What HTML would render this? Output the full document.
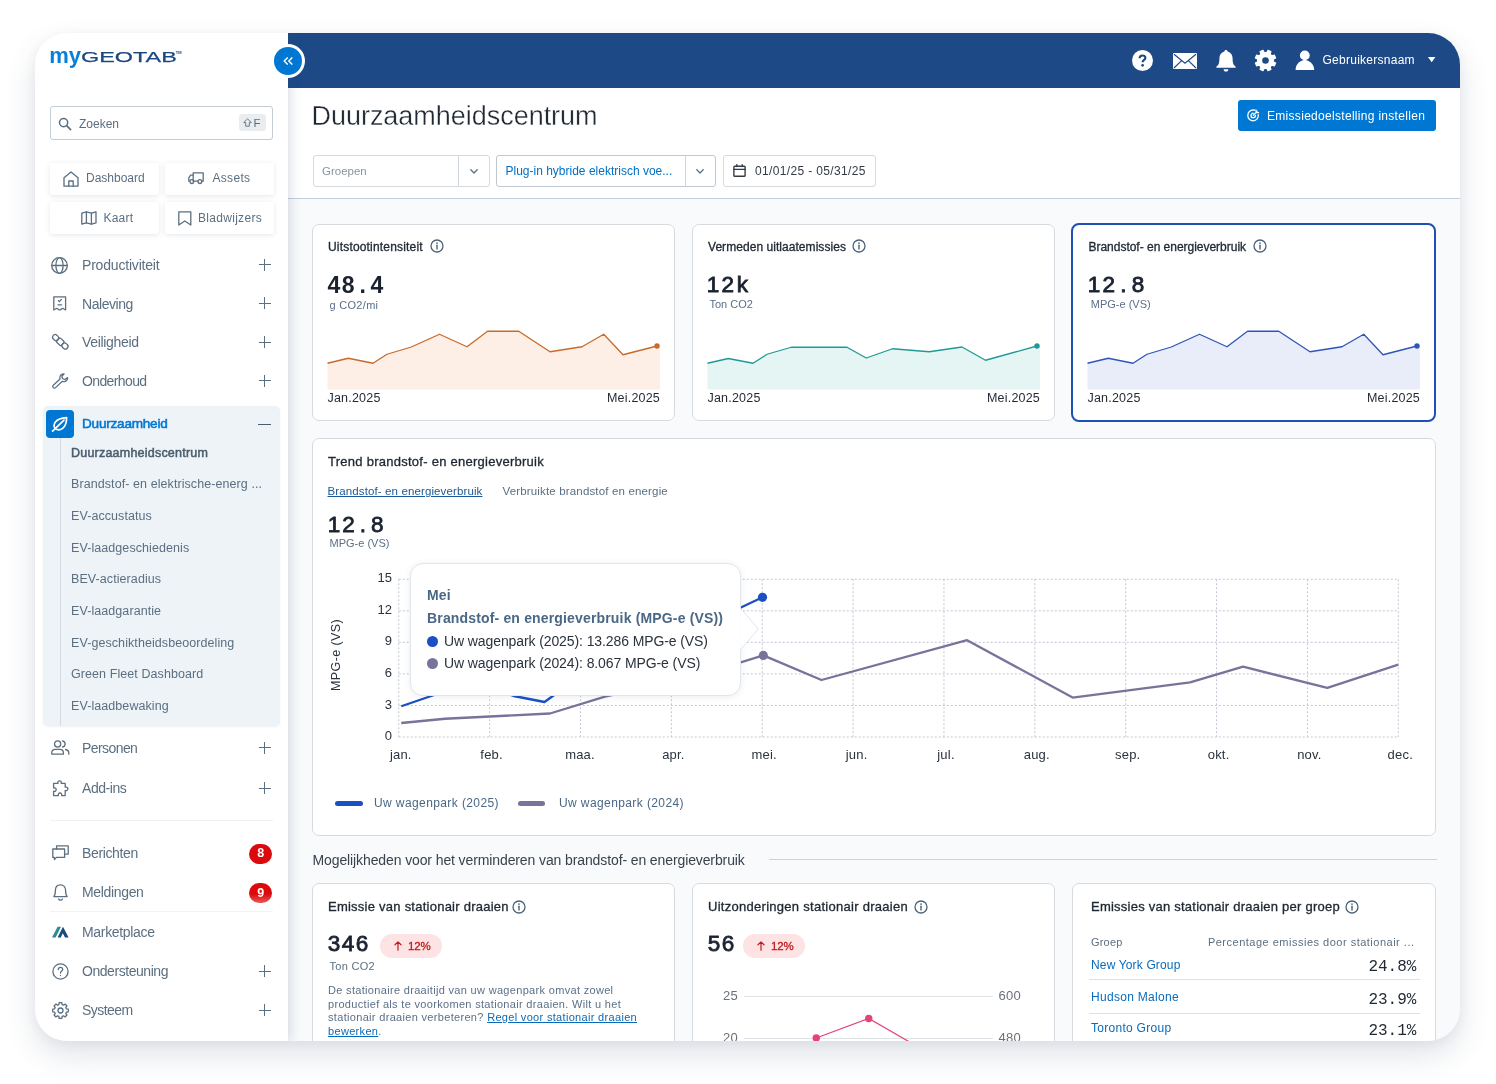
<!DOCTYPE html>
<html lang="nl">
<head>
<meta charset="utf-8">
<title>Duurzaamheidscentrum</title>
<style>
*{box-sizing:border-box;margin:0;padding:0}
html,body{width:1496px;height:1084px;background:#fff;overflow:hidden}
body{font-family:"Liberation Sans",sans-serif;color:#1f2833;position:relative}
.abs{position:absolute}
.t{position:absolute;white-space:nowrap;line-height:1}
#win{position:absolute;left:35px;top:32.5px;width:1424.5px;height:1008px;border-radius:32px;overflow:hidden;background:#f8fafc;
 box-shadow:0 14px 30px rgba(60,80,110,.16),0 2px 12px rgba(60,80,110,.06)}
/* all children of #win use page coordinates through this shifted layer */
#layer{position:absolute;left:-35px;top:-32.5px;width:1496px;height:1084px;will-change:transform}
#topbar{left:288px;top:32px;width:1172px;height:55.6px;background:#1d4a87}
#side{left:35px;top:32px;width:253px;height:1009px;background:#fff;box-shadow:1px 0 12px rgba(40,60,90,.2)}
#head{left:288px;top:87.6px;width:1172px;height:111.4px;background:#fff;border-bottom:1px solid #c3cfdb}
.mono{font-family:"Liberation Mono",monospace}
.nav{color:#5b6f80;font-size:14px;letter-spacing:-.12px}
.sub{color:#5b6f80;font-size:12.5px;letter-spacing:.08px}
.plus{position:absolute;width:12px;height:12px}
.plus:before,.plus:after{content:"";position:absolute;background:#5b6f80}
.plus:before{left:0;top:5.5px;width:12px;height:1px}
.plus:after{left:5.5px;top:0;width:1px;height:12px}
.qb{position:absolute;background:#fff;border-radius:3px;box-shadow:0 1px 5px rgba(40,60,90,.13);width:109px;height:32px}
.qt{color:#5b6f80;font-size:12px}
.card{position:absolute;background:#fff;border:1px solid #d6dade;border-radius:7px}
.ct{font-size:12px;color:#1f2833;-webkit-text-stroke:.32px #1f2833;letter-spacing:.18px}
.unit{font-size:11px;color:#5b7088;letter-spacing:.3px}
.big{font-weight:bold;font-size:22px;color:#1a2230}
.big i,.pc i{display:inline-block;text-align:center;font-style:normal}
.axis{font-size:12.5px;color:#1f2833;letter-spacing:.2px}
.sel{position:absolute;background:#fff;border:1px solid #d5dade;border-radius:3px;height:32px}
svg{position:absolute;overflow:visible}
.ic{fill:none;stroke:#5b6f80;stroke-width:1.3;stroke-linecap:round;stroke-linejoin:round}
</style>
</head>
<body>
<div id="win"><div id="layer">

<!-- ================= TOP BAR ================= -->
<div id="topbar" class="abs"></div>

<!-- ================= HEADER ================= -->
<div id="head" class="abs"></div>

<!-- ================= SIDEBAR ================= -->
<div id="side" class="abs"></div>

<!-- logo -->
<div class="t" id="logo_my" style="left:49.3px;top:45.3px;font-size:22px;font-weight:bold;color:#0a7fd9;letter-spacing:0">my</div>
<div class="t" id="logo_geo" style="left:80.8px;top:49.1px;font-size:15.5px;color:#1c4881;transform-origin:0 50%;transform:scaleX(1.51);letter-spacing:0;-webkit-text-stroke:.25px #1c4881">GEOTAB</div>
<div class="t" style="left:175.8px;top:51px;font-size:4px;font-weight:bold;color:#1c4881;letter-spacing:-.1px">TM</div>

<!-- search -->
<div class="abs" style="left:50px;top:106px;width:223px;height:34px;border:1px solid #c4ccd4;border-radius:3px;background:#fff"></div>
<svg style="left:58px;top:117px" width="14" height="14" viewBox="0 0 14 14"><circle cx="5.6" cy="5.6" r="4.1" fill="none" stroke="#5b6f80" stroke-width="1.5"/><path d="M8.7 8.7L12.6 12.6" stroke="#5b6f80" stroke-width="1.7" stroke-linecap="round"/></svg>
<div class="t" id="zoeken" style="left:79px;top:117.5px;font-size:12px;color:#5b6f80">Zoeken</div>
<div class="abs" style="left:239px;top:114px;width:27px;height:17px;border-radius:3px;background:#e9edf0"></div>
<svg style="left:243px;top:118px" width="9" height="9" viewBox="0 0 9 9"><path d="M4.5 .8L8.3 4.6H6.3V8.2H2.7V4.6H.7Z" fill="none" stroke="#5b6f80" stroke-width=".9" stroke-linejoin="round"/></svg>
<div class="t" style="left:253.5px;top:117.5px;font-size:11.5px;color:#5b6f80">F</div>

<!-- quick buttons -->
<div class="qb" style="left:50px;top:162.5px"></div>
<div class="qb" style="left:165px;top:162.5px"></div>
<div class="qb" style="left:50px;top:202px"></div>
<div class="qb" style="left:165px;top:202px"></div>
<svg style="left:63px;top:171px" width="16" height="16" viewBox="0 0 16 16" class="ic"><path d="M1 6.7L8 .9L15 6.7V15.2H1Z"/><path d="M5.8 15.2V10H10.2V15.2"/></svg>
<div class="t qt" id="q1" style="left:86px;top:172px">Dashboard</div>
<svg style="left:188px;top:172px" width="16" height="12" viewBox="0 0 16 12" class="ic"><path d="M5.2 9.2V.8H15.2V9.2H13.6"/><path d="M10.2 9.2H6.2"/><path d="M5.2 3.2H2.6L.8 5.8V9.2H1.6"/><circle cx="3.8" cy="9.6" r="1.9"/><circle cx="11.9" cy="9.6" r="1.9"/></svg>
<div class="t qt" id="q2" style="left:212.5px;top:172px;letter-spacing:.3px">Assets</div>
<svg style="left:80.5px;top:211px" width="16" height="14" viewBox="0 0 16 14" class="ic"><path d="M.8 2.2L5.4 .8L10.4 2.2L15 .8V11.8L10.4 13.2L5.4 11.8L.8 13.2Z"/><path d="M5.4 .8V11.8M10.4 2.2V13.2"/></svg>
<div class="t qt" id="q3" style="left:103.5px;top:211.5px;letter-spacing:.2px">Kaart</div>
<svg style="left:178px;top:210.5px" width="14" height="15" viewBox="0 0 14 15" class="ic"><path d="M.8 .8H12.8V14L6.8 10L.8 14Z"/></svg>
<div class="t qt" id="q4" style="left:198px;top:211.5px;letter-spacing:.3px">Bladwijzers</div>

<!-- nav group 1 -->
<svg style="left:51px;top:256.5px" width="17" height="17" viewBox="0 0 17 17" class="ic"><circle cx="8.5" cy="8.5" r="7.8"/><ellipse cx="8.5" cy="8.5" rx="3.6" ry="7.8"/><path d="M.7 8.5H16.3"/></svg>
<div class="t nav" id="n1" style="left:82px;top:258px;letter-spacing:-0.19px">Productiviteit</div><div class="plus" style="left:258.5px;top:258.5px"></div>
<svg style="left:53px;top:296px" width="14" height="15" viewBox="0 0 14 15" class="ic"><path d="M.8 13.9V.8H12.6V13.9C11.4 13.9 10.8 12.4 9.7 12.4C8.4 12.4 8 13.9 6.7 13.9C5.4 13.9 5 12.4 3.7 12.4C2.6 12.4 2 13.9 .8 13.9Z"/><path d="M5.4 4.6L6.4 5.6L8.4 3.4M5 8.8H8.6"/></svg>
<div class="t nav" id="n2" style="left:82px;top:296.5px;letter-spacing:-0.46px">Naleving</div><div class="plus" style="left:258.5px;top:297px"></div>
<svg style="left:51.5px;top:334px" width="17" height="16" viewBox="0 0 17 16" class="ic"><g transform="rotate(42 8.5 8)"><rect x="-1.2" y="5.4" width="6.2" height="5.2" rx="2.4"/><rect x="5" y="5.2" width="6.4" height="5.6" rx="1.2"/><rect x="11.4" y="5.4" width="6.2" height="5.2" rx="2.4"/></g></svg>
<div class="t nav" id="n3" style="left:82px;top:335px;letter-spacing:-0.32px">Veiligheid</div><div class="plus" style="left:258.5px;top:336px"></div>
<svg style="left:51.5px;top:373px" width="17" height="16" viewBox="0 0 17 16" class="ic"><path d="M15.6 4.6C15.8 6.9 13.9 8.8 11.6 8.6C11.1 8.6 10.7 8.5 10.3 8.3L3.6 14.6C2.9 15.3 1.8 15.3 1.2 14.6C.6 13.9 .6 12.9 1.3 12.3L8 6C7.8 5.5 7.8 5 7.8 4.5C7.9 2.3 9.9 .6 12.1 .9L9.9 3.3L10.5 5.7L13 6.5Z"/></svg>
<div class="t nav" id="n4" style="left:82px;top:373.5px;letter-spacing:-0.62px">Onderhoud</div><div class="plus" style="left:258.5px;top:374.5px"></div>

<!-- active group -->
<div class="abs" style="left:43px;top:406px;width:237px;height:319.5px;border-radius:5px;background:#eef3f7;box-shadow:0 1px 2px rgba(40,60,90,.07)"></div>
<div class="abs" style="left:46px;top:410px;width:28px;height:28px;border-radius:4px;background:#0078d3"></div>
<svg style="left:51px;top:415px" width="18" height="18" viewBox="0 0 18 18" fill="none" stroke="#fff" stroke-width="1.7" stroke-linecap="round" stroke-linejoin="round"><path d="M4.2 13.6C1.6 10.2 3.6 3.2 15.6 2.6C15.8 13.6 8.6 16.6 4.2 13.6Z"/><path d="M1.6 16.2L13 5.2"/></svg>
<div class="t" id="n5" style="left:82px;top:417.2px;font-size:13.6px;color:#0078d3;-webkit-text-stroke:.55px #0078d3;letter-spacing:-.24px">Duurzaamheid</div>
<div class="abs" style="left:258px;top:423.5px;width:13px;height:1.5px;background:#4a5d6e"></div>
<div class="abs" style="left:60px;top:438px;width:1px;height:287.5px;background:#d3dbe3"></div>
<div class="t sub" id="s1" style="left:71px;top:446.5px;color:#4a5d6e;-webkit-text-stroke:.5px #4a5d6e;letter-spacing:.22px">Duurzaamheidscentrum</div>
<div class="t sub" id="s2" style="left:71px;top:478px">Brandstof- en elektrische-energ ...</div>
<div class="t sub" id="s3" style="left:71px;top:509.5px">EV-accustatus</div>
<div class="t sub" id="s4" style="left:71px;top:541.5px">EV-laadgeschiedenis</div>
<div class="t sub" id="s5" style="left:71px;top:573px">BEV-actieradius</div>
<div class="t sub" id="s6" style="left:71px;top:604.5px">EV-laadgarantie</div>
<div class="t sub" id="s7" style="left:71px;top:636.5px">EV-geschiktheidsbeoordeling</div>
<div class="t sub" id="s8" style="left:71px;top:668px">Green Fleet Dashboard</div>
<div class="t sub" id="s9" style="left:71px;top:699.5px">EV-laadbewaking</div>

<!-- nav group 2 -->
<svg style="left:51px;top:740px" width="19" height="15" viewBox="0 0 19 15" class="ic"><circle cx="6.6" cy="4" r="3.1"/><path d="M.8 14.2V12.6C.8 10.6 2.4 9.3 4.4 9.3H8.8C10.8 9.3 12.4 10.6 12.4 12.6V14.2Z"/><path d="M11.6 1C13.1 1.3 14.1 2.5 14.1 4C14.1 5.5 13.1 6.7 11.6 7"/><path d="M14.6 9.5C16.4 9.9 17.8 11 17.8 12.8V14.2"/></svg>
<div class="t nav" id="n6" style="left:82px;top:741px;letter-spacing:-0.58px">Personen</div><div class="plus" style="left:258.5px;top:741.5px"></div>
<svg style="left:52px;top:779.5px" width="17" height="17" viewBox="0 0 17 17" class="ic"><path d="M6 3.4C5.4 1.6 6.6 .8 7.6 .8C8.6 .8 9.8 1.6 9.2 3.4H13.2V7.2C15 6.6 15.9 7.8 15.9 8.8C15.9 9.8 15 11 13.2 10.4V15.6H9.6C10.2 13.8 9 13 8 13C7 13 5.8 13.8 6.4 15.6H1.6V11.2C3.4 11.8 4.2 10.6 4.2 9.6C4.2 8.6 3.4 7.4 1.6 8V3.4Z"/></svg>
<div class="t nav" id="n7" style="left:82px;top:781px;letter-spacing:-0.45px">Add-ins</div><div class="plus" style="left:258.5px;top:782px"></div>

<div class="abs" style="left:50px;top:820px;width:223px;height:1px;background:#edf1f4"></div>

<!-- nav group 3 -->
<svg style="left:52px;top:845px" width="17" height="16" viewBox="0 0 17 16" class="ic"><path d="M4.6 4V.8H16.2V9.2H13.4"/><path d="M.8 4H12.6V12.4H4.4L2.4 14.6V12.4H.8Z"/></svg>
<div class="t nav" id="n8" style="left:82px;top:846px;letter-spacing:-0.36px">Berichten</div>
<div class="abs" style="left:249px;top:843.7px;width:23px;height:20px;border-radius:10px;background:#dc0a0c"></div>
<div class="t" style="left:249px;top:847.2px;width:23.4px;text-align:center;font-size:12.5px;font-weight:bold;color:#fff">8</div>
<svg style="left:53px;top:884px" width="15" height="17" viewBox="0 0 15 17" class="ic"><path d="M.8 12.6H14.2C13 11.4 12.6 10.2 12.6 6.4C12.6 3 10.6 .8 7.5 .8C4.4 .8 2.4 3 2.4 6.4C2.4 10.2 2 11.4 .8 12.6Z"/><path d="M5.6 15C6 16 6.8 16.2 7.5 16.2C8.2 16.2 9 16 9.4 15"/></svg>
<div class="t nav" id="n9" style="left:82px;top:885px;letter-spacing:-0.34px">Meldingen</div>
<div class="abs" style="left:249px;top:883px;width:23px;height:20px;border-radius:10px;background:linear-gradient(#dc0a0c 0,#dc0a0c 55%,#e8585c 100%)"></div>
<div class="t" style="left:249px;top:886.5px;width:23.4px;text-align:center;font-size:12.5px;font-weight:bold;color:#fff">9</div>
<div class="abs" style="left:50px;top:911px;width:223px;height:1px;background:#f1f4f6"></div>
<svg style="left:52px;top:926px" width="17" height="12" viewBox="0 0 17 12"><path d="M0 11.5L5.6 .8H9L3.6 11.5Z" fill="#2f8b8e"/><path d="M5.6 11.5L11 .8L16.6 11.5H13L10.8 7.2L8.8 11.5Z" fill="#1c4881"/></svg>
<div class="t nav" id="n10" style="left:82px;top:925px;letter-spacing:-0.32px">Marketplace</div>
<svg style="left:52px;top:962.5px" width="17" height="17" viewBox="0 0 17 17" class="ic"><circle cx="8.5" cy="8.5" r="7.6"/><path d="M6.3 6.6C6.3 5.2 7.3 4.4 8.5 4.4C9.7 4.4 10.7 5.2 10.7 6.4C10.7 8 8.5 8.2 8.5 10"/><path d="M8.5 12.4V12.6"/></svg>
<div class="t nav" id="n11" style="left:82px;top:964px;letter-spacing:-0.45px">Ondersteuning</div><div class="plus" style="left:258.5px;top:965px"></div>
<svg style="left:52px;top:1001.5px" width="17" height="17" viewBox="0 0 17 17" class="ic"><path d="M6.87 2.62 L7.16 0.71 L9.84 0.71 L10.13 2.62 L11.51 3.19 L13.06 2.05 L14.95 3.94 L13.81 5.49 L14.38 6.87 L16.29 7.16 L16.29 9.84 L14.38 10.13 L13.81 11.51 L14.95 13.06 L13.06 14.95 L11.51 13.81 L10.13 14.38 L9.84 16.29 L7.16 16.29 L6.87 14.38 L5.49 13.81 L3.94 14.95 L2.05 13.06 L3.19 11.51 L2.62 10.13 L0.71 9.84 L0.71 7.16 L2.62 6.87 L3.19 5.49 L2.05 3.94 L3.94 2.05 L5.49 3.19Z"/><circle cx="8.5" cy="8.5" r="2.5"/></svg>
<div class="t nav" id="n12" style="left:82px;top:1003px;letter-spacing:-0.56px">Systeem</div><div class="plus" style="left:258.5px;top:1004px"></div>

<!-- collapse button -->
<div class="abs" style="left:271px;top:44px;width:34px;height:34px;border-radius:17px;background:#fff"></div>
<div class="abs" style="left:274px;top:47px;width:28px;height:28px;border-radius:14px;background:#0078d3"></div>
<svg style="left:283px;top:57px" width="10" height="8" viewBox="0 0 10 8" fill="none" stroke="#fff" stroke-width="1.5" stroke-linecap="round" stroke-linejoin="round"><path d="M4.2 .9L1.2 4L4.2 7.1M8.8 .9L5.8 4L8.8 7.1"/></svg>


<!-- topbar icons -->
<svg style="left:1131.5px;top:50px" width="21" height="21" viewBox="0 0 21 21"><circle cx="10.5" cy="10.5" r="10.5" fill="#fff"/><path d="M7.6 8.3C7.6 6.5 8.9 5.5 10.5 5.5C12.1 5.5 13.4 6.5 13.4 8C13.4 9.9 10.6 10 10.6 12.3" fill="none" stroke="#1d4a87" stroke-width="2.1"/><circle cx="10.6" cy="15.3" r="1.35" fill="#1d4a87"/></svg>
<svg style="left:1172.5px;top:52.5px" width="24" height="16" viewBox="0 0 24 16"><rect x="0" y="0" width="24" height="16" rx="1" fill="#fff"/><path d="M1 1.2L12 10.2L23 1.2M1 15L8.6 7.6M23 15L15.4 7.6" fill="none" stroke="#1d4a87" stroke-width="1.2"/></svg>
<svg style="left:1216px;top:49.5px" width="20" height="22" viewBox="0 0 20 22"><path d="M10 0C11 0 11.6 .7 11.6 1.6C14.8 2.4 16.6 5 16.6 8.4C16.6 13.4 17.6 15 19.6 16.6V17.8H.4V16.6C2.4 15 3.4 13.4 3.4 8.4C3.4 5 5.2 2.4 8.4 1.6C8.4 .7 9 0 10 0Z" fill="#fff"/><path d="M7.6 19.2H12.4C12.4 20.6 11.4 21.6 10 21.6C8.6 21.6 7.6 20.6 7.6 19.2Z" fill="#fff"/></svg>
<svg style="left:1255px;top:50px" width="21" height="21" viewBox="0 0 21 21"><path fill="#fff" stroke="#fff" stroke-width="1.2" stroke-linejoin="round" d="M11.70 2.69 L13.00 0.40 L15.87 1.59 L15.17 4.13 L16.87 5.83 L19.41 5.13 L20.60 8.00 L18.31 9.30 L18.31 11.70 L20.60 13.00 L19.41 15.87 L16.87 15.17 L15.17 16.87 L15.87 19.41 L13.00 20.60 L11.70 18.31 L9.30 18.31 L8.00 20.60 L5.13 19.41 L5.83 16.87 L4.13 15.17 L1.59 15.87 L0.40 13.00 L2.69 11.70 L2.69 9.30 L0.40 8.00 L1.59 5.13 L4.13 5.83 L5.83 4.13 L5.13 1.59 L8.00 0.40 L9.30 2.69Z"/><circle cx="10.5" cy="10.5" r="7.6" fill="#fff"/><circle cx="10.5" cy="10.5" r="3.3" fill="#1d4a87"/></svg>
<svg style="left:1295px;top:50px" width="20" height="20" viewBox="0 0 20 20"><circle cx="9.8" cy="5.4" r="4.9" fill="#fff"/><path fill="#fff" d="M.6 20C.6 15 4 11.6 7.4 10.6L9.8 9.6L12.2 10.6C15.6 11.6 19.2 15 19.2 20Z"/></svg>
<div class="t" id="uname" style="left:1322.5px;top:54px;font-size:12px;color:#fff;letter-spacing:.26px">Gebruikersnaam</div>
<svg style="left:1427.8px;top:56.8px" width="7.4" height="5.6" viewBox="0 0 8 6"><path d="M0 0H8L4 5.6Z" fill="#fff"/></svg>


<!-- page header -->
<div class="t" id="title" style="left:311.5px;top:103px;font-size:27px;color:#1f2833;letter-spacing:-.03px;-webkit-text-stroke:.35px #fff">Duurzaamheidscentrum</div>
<div class="abs" style="left:1237.5px;top:100px;width:198px;height:30.5px;border-radius:3px;background:#0078d3"></div>
<svg style="left:1247px;top:109px" width="13" height="13" viewBox="0 0 13 13" fill="none" stroke="#fff" stroke-width="1.3" stroke-linecap="round"><path d="M11.2 5.6C11.8 8.8 9.4 11.8 6.2 11.8C3.2 11.8 .8 9.4 .8 6.4C.8 3.4 3.2 1 6.2 1C6.8 1 7.2 1.1 7.6 1.2"/><path d="M8.4 6.4C8.4 7.6 7.4 8.6 6.2 8.6C5 8.6 4 7.6 4 6.4C4 5.2 5 4.2 6.2 4.2"/><path d="M6.4 6.2L10.2 2.4M9 1L9.2 3.4L11.6 3.6"/></svg>
<div class="t" id="btnt" style="left:1267px;top:109.5px;font-size:12px;color:#fff;letter-spacing:.3px">Emissiedoelstelling instellen</div>

<div class="sel" style="left:312.5px;top:155px;width:177px"></div>
<div class="abs" style="left:458px;top:156px;width:1px;height:30px;background:#cfd6dd"></div>
<div class="t" id="groepen" style="left:322px;top:165.5px;font-size:11.5px;color:#8894a0">Groepen</div>
<svg style="left:469.5px;top:168.5px" width="8" height="5" viewBox="0 0 8 5" fill="none" stroke="#5b6f80" stroke-width="1.3" stroke-linecap="round" stroke-linejoin="round"><path d="M.8 .8L4 4L7.2 .8"/></svg>
<div class="sel" style="left:496px;top:155px;width:220px;border-color:#bfc8d1"></div>
<div class="abs" style="left:684.5px;top:156px;width:1px;height:30px;background:#cfd6dd"></div>
<div class="t" id="plug" style="left:505.5px;top:165px;font-size:12px;color:#0070c4">Plug-in hybride elektrisch voe...</div>
<svg style="left:696px;top:168.5px" width="8" height="5" viewBox="0 0 8 5" fill="none" stroke="#5b6f80" stroke-width="1.3" stroke-linecap="round" stroke-linejoin="round"><path d="M.8 .8L4 4L7.2 .8"/></svg>
<div class="sel" style="left:722.5px;top:155px;width:153px"></div>
<svg style="left:733px;top:164px" width="13" height="13" viewBox="0 0 13 13" fill="none" stroke="#333c46" stroke-width="1.4" stroke-linejoin="round"><rect x=".9" y="2.2" width="11.2" height="10" rx=".8"/><path d="M.9 5.4H12.1M3.8 .6V2.6M9.2 .6V2.6" stroke-linecap="round"/></svg>
<div class="t" id="date" style="left:755px;top:165px;font-size:12px;color:#333c46;letter-spacing:.35px">01/01/25 - 05/31/25</div>


<!-- row 1 cards -->
<div class="card" style="left:312px;top:223.5px;width:363px;height:197.5px"></div>
<div class="card" style="left:692px;top:223.5px;width:363px;height:197.5px"></div>
<div class="card" style="left:1070.8px;top:223px;width:365px;height:198.5px;border:2px solid #1f4fb4;border-radius:8px"></div>
<div class="t ct" id="c1t" style="left:328px;top:241px">Uitstootintensiteit</div><svg style="left:429.5px;top:239px" width="14" height="14" viewBox="0 0 14 14"><circle cx="7" cy="7" r="6" fill="none" stroke="#4d6378" stroke-width="1.3"/><path d="M7 6.3V10" stroke="#4d6378" stroke-width="1.4" stroke-linecap="round"/><circle cx="7" cy="4.1" r=".85" fill="#4d6378"/></svg>
<svg id="c1v" style="left:0;top:0" width="1496" height="1084"><text x="327.41 341.81 359.40 370.61" y="292.9" font-family="Liberation Sans, sans-serif" font-size="23" font-weight="bold" fill="#1a2230">48.4</text></svg>
<div class="t unit" id="c1u" style="left:329.5px;top:299.5px">g CO2/mi</div>
<svg style="left:0;top:0" width="1496" height="1084"><path d="M327.5 389.5 L327.50 363.25 L348.25 358.25 L373.00 363.25 L387.00 354.25 L411.25 347.00 L439.50 334.25 L467.00 346.75 L487.50 331.25 L518.75 331.25 L550.00 351.75 L582.00 346.75 L603.75 334.25 L623.00 354.75 L657.00 346.00 L660 345.20 L660 389.5Z" fill="#fdeee6"/><path d="M327.50 363.25 L348.25 358.25 L373.00 363.25 L387.00 354.25 L411.25 347.00 L439.50 334.25 L467.00 346.75 L487.50 331.25 L518.75 331.25 L550.00 351.75 L582.00 346.75 L603.75 334.25 L623.00 354.75 L657.00 346.00" fill="none" stroke="#c96a2b" stroke-width="1.3" stroke-linejoin="round"/><circle cx="657" cy="346" r="2.7" fill="#c96a2b"/></svg>
<div class="t axis" id="c1a" style="left:327.5px;top:391.5px">Jan.2025</div><div class="t axis" id="c1b" style="left:560px;width:100px;text-align:right;top:391.5px">Mei.2025</div>
<div class="t ct" id="c2t" style="left:708px;top:241px;letter-spacing:.05px">Vermeden uitlaatemissies</div><svg style="left:852px;top:239px" width="14" height="14" viewBox="0 0 14 14"><circle cx="7" cy="7" r="6" fill="none" stroke="#4d6378" stroke-width="1.3"/><path d="M7 6.3V10" stroke="#4d6378" stroke-width="1.4" stroke-linecap="round"/><circle cx="7" cy="4.1" r=".85" fill="#4d6378"/></svg>
<svg id="c2v" style="left:0;top:0" width="1496" height="1084"><text x="706.84 721.44 736.67" y="292.4" font-family="Liberation Sans, sans-serif" font-size="22.5" font-weight="normal" fill="#1a2230" stroke="#1a2230" stroke-width="0.85">12k</text></svg>
<div class="t unit" id="c2u" style="left:709.5px;top:298.5px;letter-spacing:0">Ton CO2</div>
<svg style="left:0;top:0" width="1496" height="1084"><path d="M707.5 389.5 L707.50 363.25 L728.25 358.50 L753.00 363.25 L767.00 354.25 L791.25 347.25 L847.00 347.25 L866.25 358.00 L892.50 348.75 L929.25 351.75 L962.00 347.00 L985.50 360.25 L1037.00 346.00 L1040 345.20 L1040 389.5Z" fill="#e5f5f4"/><path d="M707.50 363.25 L728.25 358.50 L753.00 363.25 L767.00 354.25 L791.25 347.25 L847.00 347.25 L866.25 358.00 L892.50 348.75 L929.25 351.75 L962.00 347.00 L985.50 360.25 L1037.00 346.00" fill="none" stroke="#1f9a94" stroke-width="1.3" stroke-linejoin="round"/><circle cx="1037" cy="346" r="2.7" fill="#1f9a94"/></svg>
<div class="t axis" style="left:707.5px;top:391.5px">Jan.2025</div><div class="t axis" style="left:940px;width:100px;text-align:right;top:391.5px">Mei.2025</div>
<div class="t ct" id="c3t" style="left:1088.5px;top:241px;letter-spacing:-.02px">Brandstof- en energieverbruik</div><svg style="left:1252.5px;top:239px" width="14" height="14" viewBox="0 0 14 14"><circle cx="7" cy="7" r="6" fill="none" stroke="#4d6378" stroke-width="1.3"/><path d="M7 6.3V10" stroke="#4d6378" stroke-width="1.4" stroke-linecap="round"/><circle cx="7" cy="4.1" r=".85" fill="#4d6378"/></svg>
<svg id="c3v" style="left:0;top:0" width="1496" height="1084"><text x="1087.84 1102.44 1120.17 1131.64" y="292.4" font-family="Liberation Sans, sans-serif" font-size="22.5" font-weight="normal" fill="#1a2230" stroke="#1a2230" stroke-width="0.85">12.8</text></svg>
<div class="t unit" id="c3u" style="left:1090.8px;top:298.5px;letter-spacing:0">MPG-e (VS)</div>
<svg style="left:0;top:0" width="1496" height="1084"><path d="M1087.5 389.5 L1087.50 363.25 L1108.25 358.25 L1133.00 363.25 L1147.00 354.25 L1171.25 347.00 L1199.50 334.25 L1227.00 346.75 L1247.50 331.25 L1278.75 331.25 L1310.00 351.75 L1342.00 346.75 L1363.75 334.25 L1383.00 354.75 L1417.00 346.00 L1420 345.20 L1420 389.5Z" fill="#e9edfa"/><path d="M1087.50 363.25 L1108.25 358.25 L1133.00 363.25 L1147.00 354.25 L1171.25 347.00 L1199.50 334.25 L1227.00 346.75 L1247.50 331.25 L1278.75 331.25 L1310.00 351.75 L1342.00 346.75 L1363.75 334.25 L1383.00 354.75 L1417.00 346.00" fill="none" stroke="#2f55b8" stroke-width="1.3" stroke-linejoin="round"/><circle cx="1417" cy="346" r="2.7" fill="#2f55b8"/></svg>
<div class="t axis" style="left:1087.5px;top:391.5px">Jan.2025</div><div class="t axis" style="left:1320px;width:100px;text-align:right;top:391.5px">Mei.2025</div>

<!-- trend card -->
<div class="card" style="left:312px;top:437.5px;width:1124px;height:398px"></div>
<div class="t" id="tt" style="left:328px;top:454.5px;font-size:13px;color:#1f2833;-webkit-text-stroke:.32px #1f2833;letter-spacing:.26px">Trend brandstof- en energieverbruik</div>
<div class="t" id="tab1" style="left:327.5px;top:486px;font-size:11.5px;color:#1b5896;text-decoration:underline;text-underline-offset:.6px;text-decoration-thickness:1px;letter-spacing:.12px">Brandstof- en energieverbruik</div>
<div class="t" id="tab2" style="left:502.5px;top:486px;font-size:11.5px;color:#5b6f80;letter-spacing:.16px">Verbruikte brandstof en energie</div>
<svg id="tv" style="left:0;top:0" width="1496" height="1084"><text x="327.84 342.25 359.77 371.04" y="532.4" font-family="Liberation Sans, sans-serif" font-size="22.5" font-weight="normal" fill="#1a2230" stroke="#1a2230" stroke-width="0.8">12.8</text></svg>
<div class="t unit" id="tu" style="left:329.5px;top:537.5px;letter-spacing:0">MPG-e (VS)</div>
<svg style="left:0;top:0" width="1496" height="1084"><path d="M398.75 737.00H1398.3" stroke="#c3c6d6" stroke-width="1" stroke-dasharray="2 2" fill="none"/><path d="M398.75 705.45H1398.3" stroke="#c3c6d6" stroke-width="1" stroke-dasharray="2 2" fill="none"/><path d="M398.75 673.90H1398.3" stroke="#c3c6d6" stroke-width="1" stroke-dasharray="2 2" fill="none"/><path d="M398.75 642.35H1398.3" stroke="#c3c6d6" stroke-width="1" stroke-dasharray="2 2" fill="none"/><path d="M398.75 610.80H1398.3" stroke="#c3c6d6" stroke-width="1" stroke-dasharray="2 2" fill="none"/><path d="M398.75 579.25H1398.3" stroke="#c3c6d6" stroke-width="1" stroke-dasharray="2 2" fill="none"/><path d="M398.75 579.25V737.0" stroke="#c3c6d6" stroke-width="1" stroke-dasharray="2 2" fill="none"/><path d="M489.62 579.25V737.0" stroke="#c3c6d6" stroke-width="1" stroke-dasharray="2 2" fill="none"/><path d="M580.49 579.25V737.0" stroke="#c3c6d6" stroke-width="1" stroke-dasharray="2 2" fill="none"/><path d="M671.35 579.25V737.0" stroke="#c3c6d6" stroke-width="1" stroke-dasharray="2 2" fill="none"/><path d="M762.22 579.25V737.0" stroke="#c3c6d6" stroke-width="1" stroke-dasharray="2 2" fill="none"/><path d="M853.09 579.25V737.0" stroke="#c3c6d6" stroke-width="1" stroke-dasharray="2 2" fill="none"/><path d="M943.96 579.25V737.0" stroke="#c3c6d6" stroke-width="1" stroke-dasharray="2 2" fill="none"/><path d="M1034.83 579.25V737.0" stroke="#c3c6d6" stroke-width="1" stroke-dasharray="2 2" fill="none"/><path d="M1125.70 579.25V737.0" stroke="#c3c6d6" stroke-width="1" stroke-dasharray="2 2" fill="none"/><path d="M1216.56 579.25V737.0" stroke="#c3c6d6" stroke-width="1" stroke-dasharray="2 2" fill="none"/><path d="M1307.43 579.25V737.0" stroke="#c3c6d6" stroke-width="1" stroke-dasharray="2 2" fill="none"/><path d="M1398.30 579.25V737.0" stroke="#c3c6d6" stroke-width="1" stroke-dasharray="2 2" fill="none"/><path d="M401.25 723 L445 718.75 L550 713.5 L605 696.7 L640 689 L700 675 L763.3 655.4 L821.5 680 L967.1 640.2 L1072.6 697.6 L1190.1 682.3 L1243.1 666.7 L1327.3 687.9 L1398.3 664.7" fill="none" stroke="#77739a" stroke-width="2.3" stroke-linejoin="round"/><path d="M401.25 706.25 L440 693 L480 684 L513.75 696 L544.5 702 L575 680 L640 652 L700 626 L740.4 607.7 L762.5 597.3" fill="none" stroke="#1d4fc4" stroke-width="2.3" stroke-linejoin="round"/><circle cx="763.3" cy="655.4" r="4.6" fill="#77739a"/><circle cx="762.5" cy="597.3" r="4.6" fill="#1d4fc4"/></svg>
<div class="t" style="left:352px;width:40px;text-align:right;top:571.2px;font-size:13px;color:#2a323c">15</div>
<div class="t" style="left:352px;width:40px;text-align:right;top:602.8px;font-size:13px;color:#2a323c">12</div>
<div class="t" style="left:352px;width:40px;text-align:right;top:634.4px;font-size:13px;color:#2a323c">9</div>
<div class="t" style="left:352px;width:40px;text-align:right;top:665.9px;font-size:13px;color:#2a323c">6</div>
<div class="t" style="left:352px;width:40px;text-align:right;top:697.5px;font-size:13px;color:#2a323c">3</div>
<div class="t" style="left:352px;width:40px;text-align:right;top:729.0px;font-size:13px;color:#2a323c">0</div>
<div class="t" style="left:370.8px;width:60px;text-align:center;top:748px;font-size:13px;color:#2a323c;letter-spacing:.2px">jan.</div>
<div class="t" style="left:461.6px;width:60px;text-align:center;top:748px;font-size:13px;color:#2a323c;letter-spacing:.2px">feb.</div>
<div class="t" style="left:550.0px;width:60px;text-align:center;top:748px;font-size:13px;color:#2a323c;letter-spacing:.2px">maa.</div>
<div class="t" style="left:643.4px;width:60px;text-align:center;top:748px;font-size:13px;color:#2a323c;letter-spacing:.2px">apr.</div>
<div class="t" style="left:734.2px;width:60px;text-align:center;top:748px;font-size:13px;color:#2a323c;letter-spacing:.2px">mei.</div>
<div class="t" style="left:826.6px;width:60px;text-align:center;top:748px;font-size:13px;color:#2a323c;letter-spacing:.2px">jun.</div>
<div class="t" style="left:916.0px;width:60px;text-align:center;top:748px;font-size:13px;color:#2a323c;letter-spacing:.2px">jul.</div>
<div class="t" style="left:1006.8px;width:60px;text-align:center;top:748px;font-size:13px;color:#2a323c;letter-spacing:.2px">aug.</div>
<div class="t" style="left:1097.7px;width:60px;text-align:center;top:748px;font-size:13px;color:#2a323c;letter-spacing:.2px">sep.</div>
<div class="t" style="left:1188.6px;width:60px;text-align:center;top:748px;font-size:13px;color:#2a323c;letter-spacing:.2px">okt.</div>
<div class="t" style="left:1279.4px;width:60px;text-align:center;top:748px;font-size:13px;color:#2a323c;letter-spacing:.2px">nov.</div>
<div class="t" style="left:1370.3px;width:60px;text-align:center;top:748px;font-size:13px;color:#2a323c;letter-spacing:.2px">dec.</div>
<div class="t" id="ytitle" style="left:336px;top:655px;font-size:12.5px;color:#2a323c;transform:translate(-50%,-50%) rotate(-90deg);letter-spacing:.4px">MPG-e (VS)</div>
<div class="abs" style="left:410px;top:563px;width:331px;height:132.5px;border-radius:13px;background:#fff;border:1px solid #e1e6eb;box-shadow:0 1px 6px rgba(60,80,110,.10)"></div>
<svg style="left:739px;top:607px" width="22" height="44" viewBox="0 0 22 44"><path d="M1.6 1.5L18 20.2Q19.6 22 18 23.8L1.6 42.5" fill="#fff" stroke="#e1e6eb" stroke-width="1" stroke-linejoin="round"/><rect x="-1" y="2.6" width="2.7" height="38.8" fill="#fff"/></svg>
<div class="t" id="tp1" style="left:427px;top:588px;font-size:14px;font-weight:bold;color:#4a6785;letter-spacing:.15px">Mei</div>
<div class="t" id="tp2" style="left:427px;top:611px;font-size:14px;font-weight:bold;color:#4a6785;letter-spacing:.16px">Brandstof- en energieverbruik (MPG-e (VS))</div>
<div class="abs" style="left:427px;top:635.5px;width:11px;height:11px;border-radius:6px;background:#1d4fc4"></div>
<div class="t" id="tp3" style="left:444px;top:634px;font-size:14px;color:#2a323c;letter-spacing:-.1px">Uw wagenpark (2025): 13.286 MPG-e (VS)</div>
<div class="abs" style="left:427px;top:657.5px;width:11px;height:11px;border-radius:6px;background:#77739a"></div>
<div class="t" id="tp4" style="left:444px;top:656px;font-size:14px;color:#2a323c;letter-spacing:-.1px">Uw wagenpark (2024): 8.067 MPG-e (VS)</div>
<div class="abs" style="left:335px;top:800.5px;width:28px;height:5px;border-radius:3px;background:#1d4fc4"></div>
<div class="t" id="lg1" style="left:374px;top:797px;font-size:12px;color:#4a6785;letter-spacing:.4px">Uw wagenpark (2025)</div>
<div class="abs" style="left:517.5px;top:800.5px;width:27px;height:5px;border-radius:3px;background:#77739a"></div>
<div class="t" id="lg2" style="left:559px;top:797px;font-size:12px;color:#4a6785;letter-spacing:.4px">Uw wagenpark (2024)</div>

<!-- section label -->
<div class="t" id="sec" style="left:312.5px;top:852.5px;font-size:14px;color:#39424d;letter-spacing:-.11px">Mogelijkheden voor het verminderen van brandstof- en energieverbruik</div>
<div class="abs" style="left:768.5px;top:859px;width:668px;height:1px;background:#c9d3dd"></div>
<!-- row 3 cards -->
<div class="card" style="left:312px;top:883px;width:363px;height:200px"></div>
<div class="card" style="left:692px;top:883px;width:363px;height:200px"></div>
<div class="card" style="left:1072px;top:883px;width:364px;height:200px"></div>
<div class="t" id="r1t" style="left:328px;top:900px;font-size:13px;color:#1f2833;-webkit-text-stroke:.32px #1f2833;letter-spacing:.245px">Emissie van stationair draaien</div><svg style="left:512.25px;top:899.75px" width="14" height="14" viewBox="0 0 14 14"><circle cx="7" cy="7" r="6" fill="none" stroke="#4d6378" stroke-width="1.3"/><path d="M7 6.3V10" stroke="#4d6378" stroke-width="1.4" stroke-linecap="round"/><circle cx="7" cy="4.1" r=".85" fill="#4d6378"/></svg>
<svg id="r1v" style="left:0;top:0" width="1496" height="1084"><text x="327.75 341.75 355.75" y="951.1" font-family="Liberation Sans, sans-serif" font-size="22.5" font-weight="normal" fill="#1a2230" stroke="#1a2230" stroke-width="0.8">346</text></svg>
<div class="abs" style="left:380px;top:934px;width:62px;height:23.5px;border-radius:12px;background:#fde3e3"></div><svg style="left:393.5px;top:941px" width="8" height="10" viewBox="0 0 8 10" fill="none" stroke="#bf1a1a" stroke-width="1.2" stroke-linecap="round" stroke-linejoin="round"><path d="M4 9.2V1M1 3.8L4 .9L7 3.8"/></svg><div class="t" style="left:408px;top:940.5px;font-size:11.5px;color:#bf1a1a;-webkit-text-stroke:.3px #bf1a1a;letter-spacing:-.2px">12%</div>
<div class="t unit" id="r1u" style="left:329.5px;top:961px;color:#5b6f80">Ton CO2</div>
<div class="t" id="p0" style="left:328px;top:985.0px;font-size:11px;color:#5b7088;letter-spacing:.32px">De stationaire draaitijd van uw wagenpark omvat zowel</div>
<div class="t" id="p1" style="left:328px;top:998.6px;font-size:11px;color:#5b7088;letter-spacing:.32px">productief als te voorkomen stationair draaien. Wilt u het</div>
<div class="t" id="p2" style="left:328px;top:1012.2px;font-size:11px;color:#5b7088;letter-spacing:.32px">stationair draaien verbeteren? <span style="color:#0a6ab8;text-decoration:underline;text-underline-offset:.6px;text-decoration-thickness:1px">Regel voor stationair draaien </span></div>
<div class="t" id="p3" style="left:328px;top:1025.8px;font-size:11px;color:#5b7088;letter-spacing:.32px"><span style="color:#0a6ab8;text-decoration:underline;text-underline-offset:.6px;text-decoration-thickness:1px">bewerken</span>.</div>
<div class="t" id="r2t" style="left:708px;top:900px;font-size:13px;color:#1f2833;-webkit-text-stroke:.32px #1f2833;letter-spacing:.28px">Uitzonderingen stationair draaien</div><svg style="left:914.25px;top:899.75px" width="14" height="14" viewBox="0 0 14 14"><circle cx="7" cy="7" r="6" fill="none" stroke="#4d6378" stroke-width="1.3"/><path d="M7 6.3V10" stroke="#4d6378" stroke-width="1.4" stroke-linecap="round"/><circle cx="7" cy="4.1" r=".85" fill="#4d6378"/></svg>
<svg id="r2v" style="left:0;top:0" width="1496" height="1084"><text x="707.75 721.75" y="951.1" font-family="Liberation Sans, sans-serif" font-size="22.5" font-weight="normal" fill="#1a2230" stroke="#1a2230" stroke-width="0.8">56</text></svg>
<div class="abs" style="left:743px;top:934px;width:62px;height:23.5px;border-radius:12px;background:#fde3e3"></div><svg style="left:756.5px;top:941px" width="8" height="10" viewBox="0 0 8 10" fill="none" stroke="#bf1a1a" stroke-width="1.2" stroke-linecap="round" stroke-linejoin="round"><path d="M4 9.2V1M1 3.8L4 .9L7 3.8"/></svg><div class="t" style="left:771px;top:940.5px;font-size:11.5px;color:#bf1a1a;-webkit-text-stroke:.3px #bf1a1a;letter-spacing:-.2px">12%</div>
<div class="abs" style="left:743.5px;top:996px;width:249px;height:1px;background:#dfe3e8"></div>
<div class="abs" style="left:743.5px;top:1038px;width:249px;height:1px;background:#dfe3e8"></div>
<div class="t" style="left:700px;width:38px;text-align:right;top:989px;font-size:13px;color:#6a7078;letter-spacing:.3px">25</div>
<div class="t" style="left:700px;width:38px;text-align:right;top:1031px;font-size:13px;color:#6a7078;letter-spacing:.3px">20</div>
<div class="t" style="left:998.5px;top:989px;font-size:13px;color:#6a7078;letter-spacing:.3px">600</div>
<div class="t" style="left:998.5px;top:1031px;font-size:13px;color:#6a7078;letter-spacing:.3px">480</div>
<svg style="left:0;top:0" width="1496" height="1084"><path d="M816.25 1038L868.75 1018.5L920 1048" fill="none" stroke="#e0457b" stroke-width="1.3"/><circle cx="816.25" cy="1038" r="3.7" fill="#e0457b"/><circle cx="868.75" cy="1018.5" r="3.7" fill="#e0457b"/></svg>
<div class="t" id="r3t" style="left:1091px;top:900px;font-size:13px;color:#1f2833;-webkit-text-stroke:.32px #1f2833;letter-spacing:.236px">Emissies van stationair draaien per groep</div><svg style="left:1345px;top:899.75px" width="14" height="14" viewBox="0 0 14 14"><circle cx="7" cy="7" r="6" fill="none" stroke="#4d6378" stroke-width="1.3"/><path d="M7 6.3V10" stroke="#4d6378" stroke-width="1.4" stroke-linecap="round"/><circle cx="7" cy="4.1" r=".85" fill="#4d6378"/></svg>
<div class="t" id="g0" style="left:1091px;top:936.5px;font-size:11px;color:#5b6f80;letter-spacing:.2px">Groep</div>
<div class="t" id="g1" style="left:1114.5px;width:300px;text-align:right;top:936.5px;font-size:11px;color:#5b6f80;letter-spacing:.5px">Percentage emissies door stationair ...</div>
<div class="t" id="gr0" style="left:1091px;top:959.2px;font-size:12px;color:#0a6ab8;letter-spacing:0.15px">New York Group</div>
<div class="t mono" id="gv0" style="left:1316.4px;width:100px;text-align:right;top:959.3px;font-size:16px;color:#1f2833">24.8%</div>
<div class="t" id="gr1" style="left:1091px;top:991.3px;font-size:12px;color:#0a6ab8;letter-spacing:0.3px">Hudson Malone</div>
<div class="t mono" id="gv1" style="left:1316.4px;width:100px;text-align:right;top:991.7px;font-size:16px;color:#1f2833">23.9%</div>
<div class="t" id="gr2" style="left:1091px;top:1022.0px;font-size:12px;color:#0a6ab8;letter-spacing:0.28px">Toronto Group</div>
<div class="t mono" id="gv2" style="left:1316.4px;width:100px;text-align:right;top:1022.5px;font-size:16px;color:#1f2833">23.1%</div>
<div class="abs" style="left:1088.5px;top:979px;width:331.5px;height:1px;background:#dce1e6"></div>
<div class="abs" style="left:1088.5px;top:1013px;width:331.5px;height:1px;background:#dce1e6"></div>

</div></div>
</body>
</html>
